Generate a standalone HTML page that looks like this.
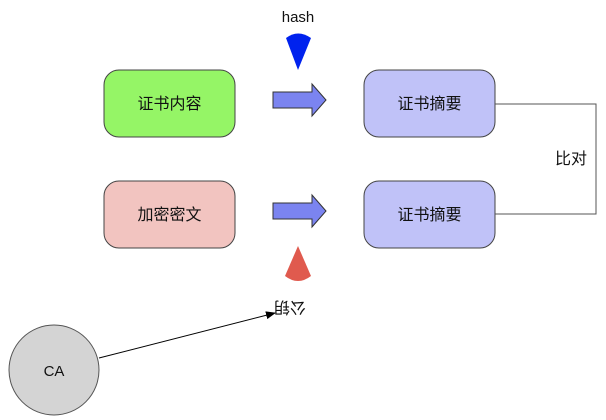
<!DOCTYPE html>
<html><head><meta charset="utf-8"><style>
html,body{margin:0;padding:0;background:#fff;}
svg{display:block;}
text{font-family:"Liberation Sans","Noto Sans CJK SC",sans-serif;fill:#111;}
</style></head><body>
<svg width="606" height="420" viewBox="0 0 606 420" xmlns="http://www.w3.org/2000/svg">
<defs>
<marker id="ah" markerWidth="10" markerHeight="8" refX="9" refY="4" orient="auto" markerUnits="userSpaceOnUse">
<path d="M0,0 L10,4 L0,8 z" fill="#000"/></marker>
</defs>
<text x="298" y="22" font-size="15" text-anchor="middle">hash</text>
<path d="M298,70 L286,38 Q298,29 311,38 Z" fill="#0022ee"/>
<path d="M298,246 L285,276 Q298,286 311,276 Z" fill="#e05a4e"/>
<rect x="104" y="70" width="131" height="67" rx="15" fill="#95f566" stroke="#444" stroke-width="1"/>
<text x="169.5" y="109" font-size="16" text-anchor="middle">证书内容</text>
<rect x="104" y="181" width="131" height="67" rx="15" fill="#f2c4c0" stroke="#444" stroke-width="1"/>
<text x="169.5" y="220" font-size="16" text-anchor="middle">加密密文</text>
<rect x="364" y="70" width="131" height="67" rx="15" fill="#c0c2f8" stroke="#444" stroke-width="1"/>
<text x="429.5" y="109" font-size="16" text-anchor="middle">证书摘要</text>
<rect x="364" y="181" width="131" height="67" rx="15" fill="#c0c2f8" stroke="#444" stroke-width="1"/>
<text x="429.5" y="220" font-size="16" text-anchor="middle">证书摘要</text>
<path d="M273,92 L312,92 L312,84 L326,100 L312,116 L312,108 L273,108 Z" fill="#7b84f0" stroke="#333" stroke-width="1"/>
<path d="M273,203 L312,203 L312,195 L326,211 L312,227 L312,219 L273,219 Z" fill="#7b84f0" stroke="#333" stroke-width="1"/>
<path d="M495,104 L596,104 L596,214 L495,214" fill="none" stroke="#555" stroke-width="1"/>
<text x="571" y="164" font-size="16" text-anchor="middle">比对</text>
<text x="290" y="314" font-size="16" text-anchor="middle" transform="rotate(180 290 308)">公钥</text>
<circle cx="54" cy="370" r="45" fill="#d4d4d4" stroke="#555" stroke-width="1"/>
<text x="54" y="376" font-size="15" text-anchor="middle">CA</text>
<line x1="99" y1="358" x2="275" y2="313" stroke="#000" stroke-width="1" marker-end="url(#ah)"/>
</svg>
</body></html>
